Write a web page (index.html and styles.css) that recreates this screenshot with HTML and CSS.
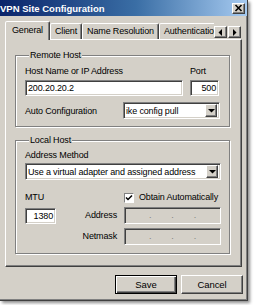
FILE: index.html
```html
<!DOCTYPE html>
<html>
<head>
<meta charset="utf-8">
<link rel="stylesheet" href="styles.css">
</head>
<body>
<div class="window">
  <div class="titlebar">
    <span class="title">VPN Site Configuration</span>
    <span class="close raised"><svg width="9" height="8" viewBox="0 0 9 8"><path d="M1.5 1 L7.5 7 M7.5 1 L1.5 7" stroke="#000" stroke-width="1.6" fill="none"/></svg></span>
  </div>
  <div class="tabstrip">
    <div class="tabs">
      <div class="tab sel">General</div>
      <div class="tab">Client</div>
      <div class="tab">Name Resolution</div>
      <div class="tab">Authentication</div>
    </div>
    <div class="arrows">
      <span class="arrow raised"><svg width="5" height="7" viewBox="0 0 5 7"><path d="M4 0 L4 7 L0.5 3.5 Z" fill="#000"/></svg></span>
      <span class="arrow raised"><svg width="5" height="7" viewBox="0 0 5 7"><path d="M1 0 L1 7 L4.5 3.5 Z" fill="#000"/></svg></span>
    </div>
  </div>
  <div class="panel">
    <fieldset class="group remote">
      <legend>Remote Host</legend>
      <div class="hostgrid">
        <span class="lbl">Host Name or IP Address</span>
        <span class="lbl">Port</span>
        <div class="field">200.20.20.2</div>
        <div class="field num">500</div>
      </div>
      <div class="autorow">
        <span class="autolabel">Auto Configuration</span>
        <div class="select short"><span>ike config pull</span><span class="ddbtn raised"><svg width="7" height="4" viewBox="0 0 7 4"><path d="M0 0 L7 0 L3.5 3.5 Z" fill="#000"/></svg></span></div>
      </div>
    </fieldset>
    <fieldset class="group local">
      <legend>Local Host</legend>
      <div class="lbl method">Address Method</div>
      <div class="select wide"><span>Use a virtual adapter and assigned address</span><span class="ddbtn raised"><svg width="7" height="4" viewBox="0 0 7 4"><path d="M0 0 L7 0 L3.5 3.5 Z" fill="#000"/></svg></span></div>
      <div class="mtugrid">
        <span class="lbl">MTU</span>
        <span></span>
        <span class="checkrow"><span class="check"><svg width="8" height="8" viewBox="0 0 8 8"><path d="M1 3.5 L3 5.5 L7 1.5" stroke="#000" stroke-width="1.5" fill="none"/></svg></span><span class="lbl">Obtain Automatically</span></span>
        <div class="field num">1380</div>
        <span class="lbl right">Address</span>
        <div class="field ip"><span>.</span><span>.</span><span>.</span></div>
        <span></span>
        <span class="lbl right">Netmask</span>
        <div class="field ip"><span>.</span><span>.</span><span>.</span></div>
      </div>
    </fieldset>
  </div>
  <div class="buttons">
    <button class="btn default">Save</button>
    <button class="btn raised">Cancel</button>
  </div>
</div>
</body>
</html>
```
FILE: styles.css
```css
html, body {
  margin: 0;
  padding: 0;
}
body {
  width: 254px;
  height: 305px;
  overflow: hidden;
  background: #ffffff;
  font-family: "Liberation Sans", Arial, sans-serif;
  font-size: 9px;
  letter-spacing: -0.15px;
  color: #000;
}
.window {
  width: 247px;
  height: 300px;
  background: #d4d0c8;
  border-right: 1px solid #404040;
  border-bottom: 1px solid #404040;
  box-shadow: inset -1px -1px 0 #808080, 2px 2px 3px rgba(0,0,0,0.45);
  display: flex;
  flex-direction: column;
}
.raised {
  box-sizing: border-box;
  background: #d4d0c8;
  border: 1px solid;
  border-color: #ffffff #404040 #404040 #ffffff;
  box-shadow: inset -1px -1px 0 #808080;
}
.titlebar {
  height: 16px;
  flex: none;
  background: linear-gradient(to right, #0a246a 0%, #3a6ea5 55%, #a6caf0 100%);
  display: flex;
  align-items: center;
  justify-content: space-between;
  padding: 0 2px 0 0;
}
.title {
  color: #fff;
  font-weight: bold;
  font-size: 9.5px;
  letter-spacing: 0;
}
.close {
  width: 13px;
  height: 11px;
  display: flex;
  align-items: center;
  justify-content: center;
}
.tabstrip {
  flex: none;
  height: 19px;
  margin-top: 5px;
  padding: 0 6px 0 5px;
  display: flex;
  align-items: flex-end;
  position: relative;
  z-index: 1;
}
.tabs {
  flex: 1;
  min-width: 0;
  height: 19px;
  overflow: hidden;
  display: flex;
  align-items: flex-start;
}
.tab {
  flex: none;
  box-sizing: border-box;
  height: 16px;
  margin-top: 2px;
  padding: 0 4px;
  line-height: 14px;
  background: #d4d0c8;
  border: 1px solid;
  border-bottom: none;
  border-color: #ffffff #404040 transparent #ffffff;
  border-radius: 2px 2px 0 0;
  box-shadow: inset -1px 0 0 #808080;
  white-space: nowrap;
}
.tab.sel {
  height: 19px;
  margin-top: 0;
  padding: 0 6px;
  line-height: 17px;
}
.arrows {
  flex: none;
  display: flex;
  gap: 1px;
  margin-bottom: 2px;
}
.arrow {
  width: 13px;
  height: 12px;
  display: flex;
  align-items: center;
  justify-content: center;
}
.panel {
  flex: none;
  box-sizing: border-box;
  height: 228px;
  margin: -1px 5px 0 5px;
  border: 1px solid;
  border-color: #ffffff #404040 #404040 #ffffff;
  box-shadow: inset -1px -1px 0 #808080;
  padding: 10px 11px 0 9px;
  display: flex;
  flex-direction: column;
}
.group {
  margin: 0;
  min-width: 0;
  border: 1px solid #808080;
  box-shadow: 1px 1px 0 #ffffff, inset 1px 1px 0 #ffffff;
  padding: 0 8px 7px 9px;
}
.group legend {
  padding: 0 1px;
  margin-left: 4px;
  line-height: 11px;
  background: #d4d0c8;
}
.lbl {
  line-height: 11px;
  white-space: nowrap;
}
.lbl.right {
  text-align: right;
}
.hostgrid {
  margin-top: 5px;
  display: grid;
  grid-template-columns: 158px 29px;
  column-gap: 7px;
  row-gap: 3px;
}
.field {
  box-sizing: border-box;
  height: 16px;
  background: #ffffff;
  border: 1px solid;
  border-color: #808080 #ffffff #ffffff #808080;
  box-shadow: inset 1px 1px 0 #404040, inset -1px -1px 0 #d4d0c8;
  padding: 0 2px;
  line-height: 14px;
  white-space: nowrap;
}
.field.num {
  text-align: right;
}
.field.ip {
  background: #d4d0c8;
  color: #808080;
  height: 17px;
  display: flex;
  justify-content: center;
  gap: 20px;
}
.autorow {
  margin-top: 6px;
  display: flex;
  align-items: center;
}
.autolabel {
  width: 98px;
  flex: none;
}
.select {
  box-sizing: border-box;
  height: 17px;
  background: #ffffff;
  border: 1px solid;
  border-color: #808080 #ffffff #ffffff #808080;
  box-shadow: inset 1px 1px 0 #404040, inset -1px -1px 0 #d4d0c8;
  padding: 0 2px 0 2px;
  display: flex;
  align-items: center;
  justify-content: space-between;
  white-space: nowrap;
}
.select.short {
  width: 97px;
}
.ddbtn {
  width: 12px;
  height: 13px;
  flex: none;
  display: flex;
  align-items: center;
  justify-content: center;
}
.group.local {
  margin-top: 8px;
  padding-bottom: 8px;
}
.method {
  margin-top: 4px;
}
.select.wide {
  margin-top: 2px;
}
.mtugrid {
  margin-top: 12px;
  display: grid;
  grid-template-columns: 31px 1fr 97px;
  column-gap: 7px;
  row-gap: 4px;
  align-items: center;
}
.checkrow {
  display: flex;
  align-items: center;
  gap: 5px;
}
.check {
  box-sizing: border-box;
  width: 10px;
  height: 10px;
  background: #ffffff;
  border: 1px solid;
  border-color: #808080 #ffffff #ffffff #808080;
  display: flex;
  align-items: center;
  justify-content: center;
}
.buttons {
  flex: none;
  margin-top: 8px;
  padding-right: 4px;
  display: flex;
  justify-content: flex-end;
  gap: 4px;
}
.btn {
  box-sizing: border-box;
  width: 62px;
  height: 19px;
  font-family: "Liberation Sans", Arial, sans-serif;
  font-size: 9.5px;
  letter-spacing: -0.1px;
  color: #000;
  padding: 0;
}
.btn.default {
  background: #d4d0c8;
  border: 1px solid #000;
  box-shadow: inset 1px 1px 0 #ffffff, inset -1px -1px 0 #404040, inset -2px -2px 0 #808080;
}
```
